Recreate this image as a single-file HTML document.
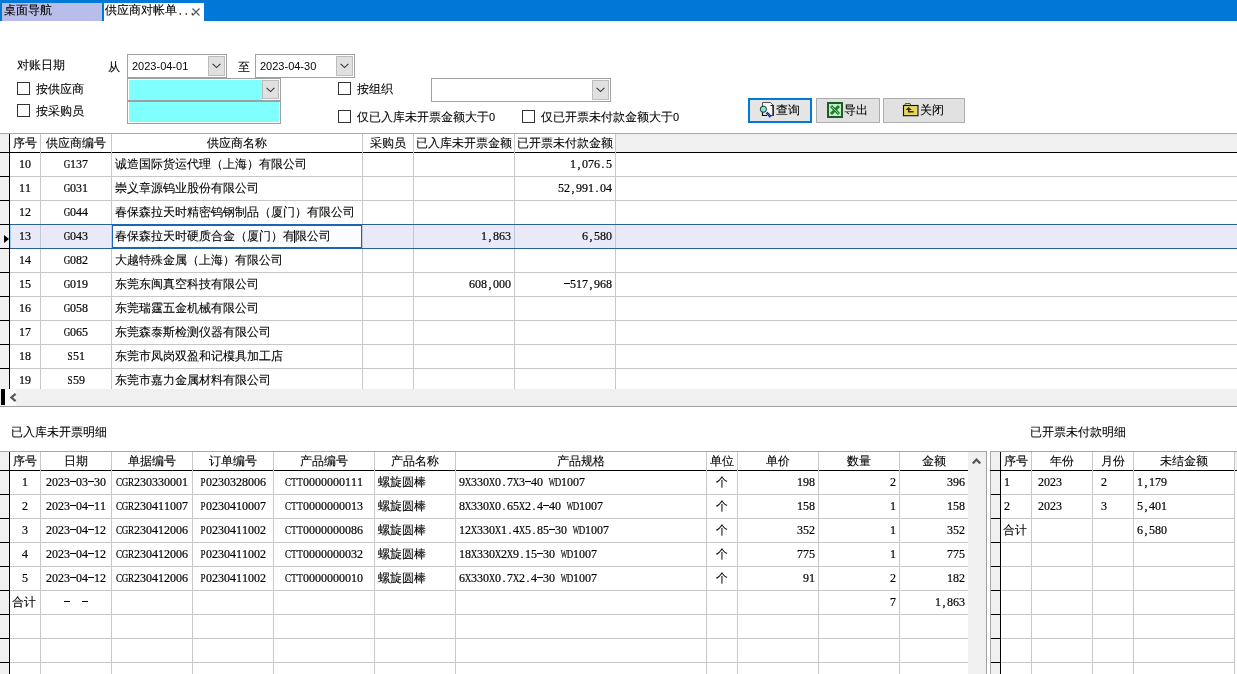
<!DOCTYPE html><html><head><meta charset="utf-8"><style>
html,body{margin:0;padding:0;}
body{width:1237px;height:674px;overflow:hidden;position:relative;background:#fff;font-family:"Liberation Sans",sans-serif;font-size:12px;color:#000;}
div,span,svg{position:absolute;box-sizing:border-box;}
span{white-space:pre;line-height:12px;}
.c{font-size:12px;-webkit-text-stroke:0.1px #000;}
.m{font-family:"Liberation Mono",monospace;font-size:11px;letter-spacing:-0.6px;line-height:12px;transform:translateY(-0.5px) scaleY(1.1);}
.s{font-family:"Liberation Sans",sans-serif;font-size:11px;line-height:12px;}
.k{font-family:"Liberation Serif",serif;font-size:12px;line-height:12px;-webkit-text-stroke:0.2px #000;}
.k i.h{height:12px;vertical-align:top;background:linear-gradient(#000,#000) 0 5px/6px 1px no-repeat;}
.k i{display:inline-block;width:6px;text-align:center;font-style:normal;}
.k b{display:inline-flex;justify-content:center;width:6px;font-weight:normal;transform:scaleX(.75);}
.k b.w{transform:scaleX(.58);}
</style></head><body><div id="root" style="left:0;top:0;width:1237px;height:674px;will-change:transform;">
<div style="left:0px;top:0px;width:1237px;height:21px;background:#0078d7;"></div>
<div style="left:2px;top:3px;width:100px;height:18px;background:#b8bde9;"></div>
<div style="left:104px;top:3px;width:100px;height:18px;background:#fff;"></div>
<span class="c" style="left:4px;top:4px;">桌面导航</span>
<span class="c" style="left:105px;top:4px;">供应商对帐单</span>
<span class="m" style="left:177px;top:6px;color:#444;">...</span>
<svg style="left:191px;top:7px;" width="10" height="10" viewBox="0 0 10 10"><path d="M1.5 1.5L8.5 8.5M8.5 1.5L1.5 8.5" stroke="#555" stroke-width="1.1"/></svg>
<span class="c" style="left:17px;top:59px;">对账日期</span>
<span class="c" style="left:108px;top:61px;">从</span>
<span class="c" style="left:238px;top:61px;">至</span>
<div style="left:127px;top:54px;width:100px;height:24px;border:1px solid #a0a0a0;background:#fff;"></div>
<div style="left:208px;top:56px;width:17px;height:20px;background:#e0e0e0;border:1px solid #bcbcbc;"></div>
<svg style="left:211px;top:63px;" width="11" height="6" viewBox="0 0 11 6"><path d="M1.6 0.9L5.5 4.6L9.4 0.9" fill="none" stroke="#333" stroke-width="1.1"/></svg>
<span class="s" style="left:132px;top:60px;">2023-04-01</span>
<div style="left:255px;top:54px;width:100px;height:24px;border:1px solid #a0a0a0;background:#fff;"></div>
<div style="left:336px;top:56px;width:17px;height:20px;background:#e0e0e0;border:1px solid #bcbcbc;"></div>
<svg style="left:339px;top:63px;" width="11" height="6" viewBox="0 0 11 6"><path d="M1.6 0.9L5.5 4.6L9.4 0.9" fill="none" stroke="#333" stroke-width="1.1"/></svg>
<span class="s" style="left:260px;top:60px;">2023-04-30</span>
<div style="left:127px;top:78px;width:154px;height:23px;border:1px solid #a0a0a0;background:#fff;"></div>
<div style="left:129px;top:80px;width:133px;height:20px;background:#80ffff;"></div>
<div style="left:262px;top:80px;width:17px;height:19px;background:#e0e0e0;border:1px solid #bcbcbc;"></div>
<svg style="left:265px;top:87px;" width="11" height="6" viewBox="0 0 11 6"><path d="M1.6 0.9L5.5 4.6L9.4 0.9" fill="none" stroke="#333" stroke-width="1.1"/></svg>
<div style="left:127px;top:101px;width:154px;height:23px;border:1px solid #a0a0a0;background:#fff;"></div>
<div style="left:129px;top:102px;width:150px;height:20px;background:#80ffff;"></div>
<div style="left:431px;top:78px;width:180px;height:24px;border:1px solid #a0a0a0;background:#fff;"></div>
<div style="left:592px;top:80px;width:17px;height:20px;background:#e0e0e0;border:1px solid #bcbcbc;"></div>
<svg style="left:595px;top:87px;" width="11" height="6" viewBox="0 0 11 6"><path d="M1.6 0.9L5.5 4.6L9.4 0.9" fill="none" stroke="#333" stroke-width="1.1"/></svg>
<div style="left:17px;top:82px;width:13px;height:13px;border:1px solid #333;background:#fff;"></div>
<span class="c" style="left:36px;top:83px;">按供应商</span>
<div style="left:17px;top:104px;width:13px;height:13px;border:1px solid #333;background:#fff;"></div>
<span class="c" style="left:36px;top:105px;">按采购员</span>
<div style="left:338px;top:82px;width:13px;height:13px;border:1px solid #333;background:#fff;"></div>
<span class="c" style="left:357px;top:83px;">按组织</span>
<div style="left:338px;top:110px;width:13px;height:13px;border:1px solid #333;background:#fff;"></div>
<span class="c" style="left:357px;top:111px;">仅已入库未开票金额大于<span class="s" style="position:static">0</span></span>
<div style="left:522px;top:110px;width:13px;height:13px;border:1px solid #333;background:#fff;"></div>
<span class="c" style="left:541px;top:111px;">仅已开票未付款金额大于<span class="s" style="position:static">0</span></span>
<div style="left:748px;top:98px;width:64px;height:25px;border:2px solid #0078d7;background:#e5e5e5;"></div>
<span class="c" style="left:776px;top:104px;">查询</span>
<div style="left:816px;top:98px;width:64px;height:25px;border:1px solid #adadad;background:#e1e1e1;"></div>
<span class="c" style="left:844px;top:104px;">导出</span>
<div style="left:883px;top:98px;width:82px;height:25px;border:1px solid #adadad;background:#e1e1e1;"></div>
<span class="c" style="left:920px;top:104px;">关闭</span>
<svg style="left:758px;top:101px;" width="18" height="18" viewBox="0 0 18 18">
<path d="M4.5 5V1.5H12.5L15 4V14.5H10" fill="#fbf4f4" stroke="#555" stroke-width="1"/>
<path d="M12.5 4.5H15.2V15" fill="none" stroke="#111" stroke-width="1.2"/>
<path d="M4.5 11V14.5H9" fill="none" stroke="#111" stroke-width="1.2"/>
<path d="M8.6 11.6L12.8 15.8" stroke="#10208a" stroke-width="2.4"/>
<path d="M8.6 11.6L12.8 15.8" stroke="#5a7ae0" stroke-width="0.7"/>
<circle cx="5.4" cy="8.2" r="3.1" fill="#7de6dc" stroke="#1a1a1a" stroke-width="0.9"/>
</svg>
<svg style="left:827px;top:102px;" width="16" height="16" viewBox="0 0 16 16">
<rect x="1" y="1" width="14" height="14" fill="#bdf2bd" stroke="#1f5a2a" stroke-width="2"/>
<path d="M4 4L12 12M12 4L4 12" stroke="#237a35" stroke-width="3"/>
<path d="M4.5 4.5L11.5 11.5" stroke="#a8e8a8" stroke-width="0.8"/>
</svg>
<svg style="left:902px;top:102px;" width="17" height="15" viewBox="0 0 17 15">
<path d="M2.5 3.5L3.5 1.5H8L9 3.5Z" fill="#d8e070" stroke="#333" stroke-width="0.8"/>
<rect x="1.5" y="3.5" width="14.5" height="10.2" fill="#e2d862" stroke="#111" stroke-width="1.1"/>
<path d="M3.6 8L6.7 4.9L9.8 8Z" fill="#3a2a10"/>
<path d="M6.7 6.5V9.8H11.6" fill="none" stroke="#3a2a10" stroke-width="1.5"/>
</svg>
<div style="left:0px;top:133px;width:1237px;height:1px;background:#a8a8a8;"></div>
<div style="left:616px;top:134px;width:621px;height:18px;background:#f0f0f0;"></div>
<div style="left:0px;top:134px;width:9px;height:255px;background:#f0f0f0;"></div>
<div style="left:9px;top:134px;width:1px;height:255px;background:#000;"></div>
<div style="left:0px;top:152px;width:1237px;height:1px;background:#000;"></div>
<div style="left:40px;top:134px;width:1px;height:255px;background:#c8c8c8;"></div>
<div style="left:111px;top:134px;width:1px;height:255px;background:#c8c8c8;"></div>
<div style="left:362px;top:134px;width:1px;height:255px;background:#c8c8c8;"></div>
<div style="left:413px;top:134px;width:1px;height:255px;background:#c8c8c8;"></div>
<div style="left:514px;top:134px;width:1px;height:255px;background:#c8c8c8;"></div>
<div style="left:615px;top:134px;width:1px;height:255px;background:#c8c8c8;"></div>
<span class="c" style="left:10px;top:137px;width:30px;text-align:center;">序号</span>
<span class="c" style="left:41px;top:137px;width:70px;text-align:center;">供应商编号</span>
<span class="c" style="left:112px;top:137px;width:250px;text-align:center;">供应商名称</span>
<span class="c" style="left:363px;top:137px;width:50px;text-align:center;">采购员</span>
<span class="c" style="left:414px;top:137px;width:100px;text-align:center;">已入库未开票金额</span>
<span class="c" style="left:515px;top:137px;width:100px;text-align:center;">已开票未付款金额</span>
<div style="left:10px;top:176px;width:1227px;height:1px;background:#c8c8c8;"></div>
<div style="left:0px;top:176px;width:9px;height:1px;background:#000;"></div>
<div style="left:10px;top:200px;width:1227px;height:1px;background:#c8c8c8;"></div>
<div style="left:0px;top:200px;width:9px;height:1px;background:#000;"></div>
<div style="left:10px;top:224px;width:1227px;height:1px;background:#c8c8c8;"></div>
<div style="left:0px;top:224px;width:9px;height:1px;background:#000;"></div>
<div style="left:10px;top:248px;width:1227px;height:1px;background:#c8c8c8;"></div>
<div style="left:0px;top:248px;width:9px;height:1px;background:#000;"></div>
<div style="left:10px;top:272px;width:1227px;height:1px;background:#c8c8c8;"></div>
<div style="left:0px;top:272px;width:9px;height:1px;background:#000;"></div>
<div style="left:10px;top:296px;width:1227px;height:1px;background:#c8c8c8;"></div>
<div style="left:0px;top:296px;width:9px;height:1px;background:#000;"></div>
<div style="left:10px;top:320px;width:1227px;height:1px;background:#c8c8c8;"></div>
<div style="left:0px;top:320px;width:9px;height:1px;background:#000;"></div>
<div style="left:10px;top:344px;width:1227px;height:1px;background:#c8c8c8;"></div>
<div style="left:0px;top:344px;width:9px;height:1px;background:#000;"></div>
<div style="left:10px;top:368px;width:1227px;height:1px;background:#c8c8c8;"></div>
<div style="left:0px;top:368px;width:9px;height:1px;background:#000;"></div>
<div style="left:10px;top:225px;width:1227px;height:23px;background:#e9e9f8;"></div>
<div style="left:40px;top:225px;width:1px;height:23px;background:#c0c8dc;"></div>
<div style="left:111px;top:225px;width:1px;height:23px;background:#c0c8dc;"></div>
<div style="left:362px;top:225px;width:1px;height:23px;background:#c0c8dc;"></div>
<div style="left:413px;top:225px;width:1px;height:23px;background:#c0c8dc;"></div>
<div style="left:514px;top:225px;width:1px;height:23px;background:#c0c8dc;"></div>
<div style="left:615px;top:225px;width:1px;height:23px;background:#c0c8dc;"></div>
<div style="left:10px;top:224px;width:1227px;height:1px;background:#2a6296;"></div>
<div style="left:10px;top:248px;width:1227px;height:1px;background:#2a6296;"></div>
<div style="left:10px;top:225px;width:1px;height:23px;background:#9fd0f0;"></div>
<div style="left:112px;top:224px;width:250px;height:25px;border:2px solid #1c64b4;border-left-width:1px;border-right-width:1px;background:#fbfcff;"></div>
<svg style="left:4px;top:235px;" width="5" height="8" viewBox="0 0 5 8"><path d="M0 0L5 4L0 8Z" fill="#000"/></svg>
<span class="k" style="left:19px;top:158px;"><i>1</i><i>0</i></span>
<span class="k" style="left:64px;top:158px;"><i><b>G</b></i><i>1</i><i>3</i><i>7</i></span>
<span class="c" style="left:115px;top:158px;">诚造国际货运代理（上海）有限公司</span>
<span class="k" style="left:570px;top:158px;"><i>1</i><i>,</i><i>0</i><i>7</i><i>6</i><i>.</i><i>5</i></span>
<span class="k" style="left:19px;top:182px;"><i>1</i><i>1</i></span>
<span class="k" style="left:64px;top:182px;"><i><b>G</b></i><i>0</i><i>3</i><i>1</i></span>
<span class="c" style="left:115px;top:182px;">崇义章源钨业股份有限公司</span>
<span class="k" style="left:558px;top:182px;"><i>5</i><i>2</i><i>,</i><i>9</i><i>9</i><i>1</i><i>.</i><i>0</i><i>4</i></span>
<span class="k" style="left:19px;top:206px;"><i>1</i><i>2</i></span>
<span class="k" style="left:64px;top:206px;"><i><b>G</b></i><i>0</i><i>4</i><i>4</i></span>
<span class="c" style="left:115px;top:206px;">春保森拉天时精密钨钢制品（厦门）有限公司</span>
<span class="k" style="left:19px;top:230px;"><i>1</i><i>3</i></span>
<span class="k" style="left:64px;top:230px;"><i><b>G</b></i><i>0</i><i>4</i><i>3</i></span>
<span class="c" style="left:115px;top:230px;">春保森拉天时硬质合金（厦门）有限公司</span>
<span class="k" style="left:481px;top:230px;"><i>1</i><i>,</i><i>8</i><i>6</i><i>3</i></span>
<span class="k" style="left:582px;top:230px;"><i>6</i><i>,</i><i>5</i><i>8</i><i>0</i></span>
<span class="k" style="left:19px;top:254px;"><i>1</i><i>4</i></span>
<span class="k" style="left:64px;top:254px;"><i><b>G</b></i><i>0</i><i>8</i><i>2</i></span>
<span class="c" style="left:115px;top:254px;">大越特殊金属（上海）有限公司</span>
<span class="k" style="left:19px;top:278px;"><i>1</i><i>5</i></span>
<span class="k" style="left:64px;top:278px;"><i><b>G</b></i><i>0</i><i>1</i><i>9</i></span>
<span class="c" style="left:115px;top:278px;">东莞东闽真空科技有限公司</span>
<span class="k" style="left:469px;top:278px;"><i>6</i><i>0</i><i>8</i><i>,</i><i>0</i><i>0</i><i>0</i></span>
<span class="k" style="left:564px;top:278px;"><i class="h"></i><i>5</i><i>1</i><i>7</i><i>,</i><i>9</i><i>6</i><i>8</i></span>
<span class="k" style="left:19px;top:302px;"><i>1</i><i>6</i></span>
<span class="k" style="left:64px;top:302px;"><i><b>G</b></i><i>0</i><i>5</i><i>8</i></span>
<span class="c" style="left:115px;top:302px;">东莞瑞霆五金机械有限公司</span>
<span class="k" style="left:19px;top:326px;"><i>1</i><i>7</i></span>
<span class="k" style="left:64px;top:326px;"><i><b>G</b></i><i>0</i><i>6</i><i>5</i></span>
<span class="c" style="left:115px;top:326px;">东莞森泰斯检测仪器有限公司</span>
<span class="k" style="left:19px;top:350px;"><i>1</i><i>8</i></span>
<span class="k" style="left:67px;top:350px;"><i><b>S</b></i><i>5</i><i>1</i></span>
<span class="c" style="left:115px;top:350px;">东莞市凤岗双盈和记模具加工店</span>
<span class="k" style="left:19px;top:374px;"><i>1</i><i>9</i></span>
<span class="k" style="left:67px;top:374px;"><i><b>S</b></i><i>5</i><i>9</i></span>
<span class="c" style="left:115px;top:374px;">东莞市嘉力金属材料有限公司</span>
<div style="left:294px;top:230px;width:1px;height:13px;background:#000;"></div>
<div style="left:0px;top:389px;width:1237px;height:17px;background:#f0f0f0;"></div>
<div style="left:5px;top:389px;width:11px;height:17px;background:#fafafa;"></div>
<div style="left:1px;top:389px;width:4px;height:16px;background:#000;"></div>
<svg style="left:10px;top:393px;" width="7" height="9" viewBox="0 0 7 9"><path d="M5.6 0.8L1.4 4.5L5.6 8.2" fill="none" stroke="#555" stroke-width="2.2"/></svg>
<div style="left:0px;top:406px;width:1237px;height:1px;background:#a0a0a0;"></div>
<span class="c" style="left:11px;top:426px;">已入库未开票明细</span>
<div style="left:0px;top:451px;width:987px;height:1px;background:#a8a8a8;"></div>
<div style="left:0px;top:452px;width:9px;height:222px;background:#f0f0f0;"></div>
<div style="left:9px;top:452px;width:1px;height:222px;background:#000;"></div>
<div style="left:0px;top:470px;width:968px;height:1px;background:#000;"></div>
<div style="left:40px;top:452px;width:1px;height:222px;background:#c8c8c8;"></div>
<div style="left:111px;top:452px;width:1px;height:222px;background:#c8c8c8;"></div>
<div style="left:192px;top:452px;width:1px;height:222px;background:#c8c8c8;"></div>
<div style="left:273px;top:452px;width:1px;height:222px;background:#c8c8c8;"></div>
<div style="left:374px;top:452px;width:1px;height:222px;background:#c8c8c8;"></div>
<div style="left:455px;top:452px;width:1px;height:222px;background:#c8c8c8;"></div>
<div style="left:706px;top:452px;width:1px;height:222px;background:#c8c8c8;"></div>
<div style="left:737px;top:452px;width:1px;height:222px;background:#c8c8c8;"></div>
<div style="left:818px;top:452px;width:1px;height:222px;background:#c8c8c8;"></div>
<div style="left:899px;top:452px;width:1px;height:222px;background:#c8c8c8;"></div>
<span class="c" style="left:10px;top:455px;width:30px;text-align:center;">序号</span>
<span class="c" style="left:41px;top:455px;width:70px;text-align:center;">日期</span>
<span class="c" style="left:112px;top:455px;width:80px;text-align:center;">单据编号</span>
<span class="c" style="left:193px;top:455px;width:80px;text-align:center;">订单编号</span>
<span class="c" style="left:274px;top:455px;width:100px;text-align:center;">产品编号</span>
<span class="c" style="left:375px;top:455px;width:80px;text-align:center;">产品名称</span>
<span class="c" style="left:456px;top:455px;width:250px;text-align:center;">产品规格</span>
<span class="c" style="left:707px;top:455px;width:30px;text-align:center;">单位</span>
<span class="c" style="left:738px;top:455px;width:80px;text-align:center;">单价</span>
<span class="c" style="left:819px;top:455px;width:80px;text-align:center;">数量</span>
<span class="c" style="left:900px;top:455px;width:68px;text-align:center;">金额</span>
<span class="k" style="left:22px;top:476px;"><i>1</i></span>
<span class="k" style="left:46px;top:476px;"><i>2</i><i>0</i><i>2</i><i>3</i><i class="h"></i><i>0</i><i>3</i><i class="h"></i><i>3</i><i>0</i></span>
<span class="k" style="left:116px;top:476px;"><i><b>C</b></i><i><b>G</b></i><i><b>R</b></i><i>2</i><i>3</i><i>0</i><i>3</i><i>3</i><i>0</i><i>0</i><i>0</i><i>1</i></span>
<span class="k" style="left:200px;top:476px;"><i><b>P</b></i><i>0</i><i>2</i><i>3</i><i>0</i><i>3</i><i>2</i><i>8</i><i>0</i><i>0</i><i>6</i></span>
<span class="k" style="left:285px;top:476px;"><i><b>C</b></i><i><b>T</b></i><i><b>T</b></i><i>0</i><i>0</i><i>0</i><i>0</i><i>0</i><i>0</i><i>0</i><i>1</i><i>1</i><i>1</i></span>
<span class="c" style="left:378px;top:476px;">螺旋圆棒</span>
<span class="k" style="left:459px;top:476px;"><i>9</i><i><b>X</b></i><i>3</i><i>3</i><i>0</i><i><b>X</b></i><i>0</i><i>.</i><i>7</i><i><b>X</b></i><i>3</i><i class="h"></i><i>4</i><i>0</i><i> </i><i><b class="w">W</b></i><i><b>D</b></i><i>1</i><i>0</i><i>0</i><i>7</i></span>
<span class="c" style="left:707px;top:476px;width:30px;text-align:center;">个</span>
<span class="k" style="left:797px;top:476px;"><i>1</i><i>9</i><i>8</i></span>
<span class="k" style="left:890px;top:476px;"><i>2</i></span>
<span class="k" style="left:947px;top:476px;"><i>3</i><i>9</i><i>6</i></span>
<div style="left:10px;top:494px;width:958px;height:1px;background:#c8c8c8;"></div>
<div style="left:0px;top:494px;width:9px;height:1px;background:#000;"></div>
<span class="k" style="left:22px;top:500px;"><i>2</i></span>
<span class="k" style="left:46px;top:500px;"><i>2</i><i>0</i><i>2</i><i>3</i><i class="h"></i><i>0</i><i>4</i><i class="h"></i><i>1</i><i>1</i></span>
<span class="k" style="left:116px;top:500px;"><i><b>C</b></i><i><b>G</b></i><i><b>R</b></i><i>2</i><i>3</i><i>0</i><i>4</i><i>1</i><i>1</i><i>0</i><i>0</i><i>7</i></span>
<span class="k" style="left:200px;top:500px;"><i><b>P</b></i><i>0</i><i>2</i><i>3</i><i>0</i><i>4</i><i>1</i><i>0</i><i>0</i><i>0</i><i>7</i></span>
<span class="k" style="left:285px;top:500px;"><i><b>C</b></i><i><b>T</b></i><i><b>T</b></i><i>0</i><i>0</i><i>0</i><i>0</i><i>0</i><i>0</i><i>0</i><i>0</i><i>1</i><i>3</i></span>
<span class="c" style="left:378px;top:500px;">螺旋圆棒</span>
<span class="k" style="left:459px;top:500px;"><i>8</i><i><b>X</b></i><i>3</i><i>3</i><i>0</i><i><b>X</b></i><i>0</i><i>.</i><i>6</i><i>5</i><i><b>X</b></i><i>2</i><i>.</i><i>4</i><i class="h"></i><i>4</i><i>0</i><i> </i><i><b class="w">W</b></i><i><b>D</b></i><i>1</i><i>0</i><i>0</i><i>7</i></span>
<span class="c" style="left:707px;top:500px;width:30px;text-align:center;">个</span>
<span class="k" style="left:797px;top:500px;"><i>1</i><i>5</i><i>8</i></span>
<span class="k" style="left:890px;top:500px;"><i>1</i></span>
<span class="k" style="left:947px;top:500px;"><i>1</i><i>5</i><i>8</i></span>
<div style="left:10px;top:518px;width:958px;height:1px;background:#c8c8c8;"></div>
<div style="left:0px;top:518px;width:9px;height:1px;background:#000;"></div>
<span class="k" style="left:22px;top:524px;"><i>3</i></span>
<span class="k" style="left:46px;top:524px;"><i>2</i><i>0</i><i>2</i><i>3</i><i class="h"></i><i>0</i><i>4</i><i class="h"></i><i>1</i><i>2</i></span>
<span class="k" style="left:116px;top:524px;"><i><b>C</b></i><i><b>G</b></i><i><b>R</b></i><i>2</i><i>3</i><i>0</i><i>4</i><i>1</i><i>2</i><i>0</i><i>0</i><i>6</i></span>
<span class="k" style="left:200px;top:524px;"><i><b>P</b></i><i>0</i><i>2</i><i>3</i><i>0</i><i>4</i><i>1</i><i>1</i><i>0</i><i>0</i><i>2</i></span>
<span class="k" style="left:285px;top:524px;"><i><b>C</b></i><i><b>T</b></i><i><b>T</b></i><i>0</i><i>0</i><i>0</i><i>0</i><i>0</i><i>0</i><i>0</i><i>0</i><i>8</i><i>6</i></span>
<span class="c" style="left:378px;top:524px;">螺旋圆棒</span>
<span class="k" style="left:459px;top:524px;"><i>1</i><i>2</i><i><b>X</b></i><i>3</i><i>3</i><i>0</i><i><b>X</b></i><i>1</i><i>.</i><i>4</i><i><b>X</b></i><i>5</i><i>.</i><i>8</i><i>5</i><i class="h"></i><i>3</i><i>0</i><i> </i><i><b class="w">W</b></i><i><b>D</b></i><i>1</i><i>0</i><i>0</i><i>7</i></span>
<span class="c" style="left:707px;top:524px;width:30px;text-align:center;">个</span>
<span class="k" style="left:797px;top:524px;"><i>3</i><i>5</i><i>2</i></span>
<span class="k" style="left:890px;top:524px;"><i>1</i></span>
<span class="k" style="left:947px;top:524px;"><i>3</i><i>5</i><i>2</i></span>
<div style="left:10px;top:542px;width:958px;height:1px;background:#c8c8c8;"></div>
<div style="left:0px;top:542px;width:9px;height:1px;background:#000;"></div>
<span class="k" style="left:22px;top:548px;"><i>4</i></span>
<span class="k" style="left:46px;top:548px;"><i>2</i><i>0</i><i>2</i><i>3</i><i class="h"></i><i>0</i><i>4</i><i class="h"></i><i>1</i><i>2</i></span>
<span class="k" style="left:116px;top:548px;"><i><b>C</b></i><i><b>G</b></i><i><b>R</b></i><i>2</i><i>3</i><i>0</i><i>4</i><i>1</i><i>2</i><i>0</i><i>0</i><i>6</i></span>
<span class="k" style="left:200px;top:548px;"><i><b>P</b></i><i>0</i><i>2</i><i>3</i><i>0</i><i>4</i><i>1</i><i>1</i><i>0</i><i>0</i><i>2</i></span>
<span class="k" style="left:285px;top:548px;"><i><b>C</b></i><i><b>T</b></i><i><b>T</b></i><i>0</i><i>0</i><i>0</i><i>0</i><i>0</i><i>0</i><i>0</i><i>0</i><i>3</i><i>2</i></span>
<span class="c" style="left:378px;top:548px;">螺旋圆棒</span>
<span class="k" style="left:459px;top:548px;"><i>1</i><i>8</i><i><b>X</b></i><i>3</i><i>3</i><i>0</i><i><b>X</b></i><i>2</i><i><b>X</b></i><i>9</i><i>.</i><i>1</i><i>5</i><i class="h"></i><i>3</i><i>0</i><i> </i><i><b class="w">W</b></i><i><b>D</b></i><i>1</i><i>0</i><i>0</i><i>7</i></span>
<span class="c" style="left:707px;top:548px;width:30px;text-align:center;">个</span>
<span class="k" style="left:797px;top:548px;"><i>7</i><i>7</i><i>5</i></span>
<span class="k" style="left:890px;top:548px;"><i>1</i></span>
<span class="k" style="left:947px;top:548px;"><i>7</i><i>7</i><i>5</i></span>
<div style="left:10px;top:566px;width:958px;height:1px;background:#c8c8c8;"></div>
<div style="left:0px;top:566px;width:9px;height:1px;background:#000;"></div>
<span class="k" style="left:22px;top:572px;"><i>5</i></span>
<span class="k" style="left:46px;top:572px;"><i>2</i><i>0</i><i>2</i><i>3</i><i class="h"></i><i>0</i><i>4</i><i class="h"></i><i>1</i><i>2</i></span>
<span class="k" style="left:116px;top:572px;"><i><b>C</b></i><i><b>G</b></i><i><b>R</b></i><i>2</i><i>3</i><i>0</i><i>4</i><i>1</i><i>2</i><i>0</i><i>0</i><i>6</i></span>
<span class="k" style="left:200px;top:572px;"><i><b>P</b></i><i>0</i><i>2</i><i>3</i><i>0</i><i>4</i><i>1</i><i>1</i><i>0</i><i>0</i><i>2</i></span>
<span class="k" style="left:285px;top:572px;"><i><b>C</b></i><i><b>T</b></i><i><b>T</b></i><i>0</i><i>0</i><i>0</i><i>0</i><i>0</i><i>0</i><i>0</i><i>0</i><i>1</i><i>0</i></span>
<span class="c" style="left:378px;top:572px;">螺旋圆棒</span>
<span class="k" style="left:459px;top:572px;"><i>6</i><i><b>X</b></i><i>3</i><i>3</i><i>0</i><i><b>X</b></i><i>0</i><i>.</i><i>7</i><i><b>X</b></i><i>2</i><i>.</i><i>4</i><i class="h"></i><i>3</i><i>0</i><i> </i><i><b class="w">W</b></i><i><b>D</b></i><i>1</i><i>0</i><i>0</i><i>7</i></span>
<span class="c" style="left:707px;top:572px;width:30px;text-align:center;">个</span>
<span class="k" style="left:803px;top:572px;"><i>9</i><i>1</i></span>
<span class="k" style="left:890px;top:572px;"><i>2</i></span>
<span class="k" style="left:947px;top:572px;"><i>1</i><i>8</i><i>2</i></span>
<div style="left:10px;top:590px;width:958px;height:1px;background:#c8c8c8;"></div>
<div style="left:0px;top:590px;width:9px;height:1px;background:#000;"></div>
<span class="c" style="left:12px;top:596px;">合计</span>
<span class="k" style="left:64px;top:596px;"><i class="h"></i><i> </i><i> </i><i class="h"></i></span>
<span class="k" style="left:890px;top:596px;"><i>7</i></span>
<span class="k" style="left:935px;top:596px;"><i>1</i><i>,</i><i>8</i><i>6</i><i>3</i></span>
<div style="left:10px;top:614px;width:958px;height:1px;background:#c8c8c8;"></div>
<div style="left:0px;top:614px;width:9px;height:1px;background:#000;"></div>
<div style="left:10px;top:638px;width:958px;height:1px;background:#c8c8c8;"></div>
<div style="left:0px;top:638px;width:9px;height:1px;background:#000;"></div>
<div style="left:10px;top:662px;width:958px;height:1px;background:#c8c8c8;"></div>
<div style="left:0px;top:662px;width:9px;height:1px;background:#000;"></div>
<div style="left:968px;top:452px;width:18px;height:222px;background:#f0f0f0;"></div>
<div style="left:986px;top:452px;width:1px;height:222px;background:#a0a0a0;"></div>
<svg style="left:972px;top:458px;" width="9" height="7" viewBox="0 0 9 7"><path d="M0.8 5.6L4.5 1.6L8.2 5.6" fill="none" stroke="#555" stroke-width="2.2"/></svg>
<span class="c" style="left:1030px;top:426px;">已开票未付款明细</span>
<div style="left:990px;top:451px;width:247px;height:1px;background:#a8a8a8;"></div>
<div style="left:990px;top:452px;width:1px;height:222px;background:#a8a8a8;"></div>
<div style="left:991px;top:452px;width:9px;height:222px;background:#f0f0f0;"></div>
<div style="left:1000px;top:452px;width:1px;height:222px;background:#000;"></div>
<div style="left:990px;top:470px;width:247px;height:1px;background:#000;"></div>
<div style="left:1235px;top:452px;width:2px;height:18px;background:#f0f0f0;"></div>
<div style="left:1031px;top:452px;width:1px;height:222px;background:#c8c8c8;"></div>
<div style="left:1092px;top:452px;width:1px;height:222px;background:#c8c8c8;"></div>
<div style="left:1133px;top:452px;width:1px;height:222px;background:#c8c8c8;"></div>
<div style="left:1234px;top:452px;width:1px;height:222px;background:#c8c8c8;"></div>
<span class="c" style="left:1001px;top:455px;width:30px;text-align:center;">序号</span>
<span class="c" style="left:1032px;top:455px;width:60px;text-align:center;">年份</span>
<span class="c" style="left:1093px;top:455px;width:40px;text-align:center;">月份</span>
<span class="c" style="left:1134px;top:455px;width:100px;text-align:center;">未结金额</span>
<span class="k" style="left:1004px;top:476px;"><i>1</i></span>
<span class="k" style="left:1038px;top:476px;"><i>2</i><i>0</i><i>2</i><i>3</i></span>
<span class="k" style="left:1101px;top:476px;"><i>2</i></span>
<span class="k" style="left:1137px;top:476px;"><i>1</i><i>,</i><i>1</i><i>7</i><i>9</i></span>
<div style="left:1001px;top:494px;width:233px;height:1px;background:#c8c8c8;"></div>
<div style="left:991px;top:494px;width:9px;height:1px;background:#000;"></div>
<span class="k" style="left:1004px;top:500px;"><i>2</i></span>
<span class="k" style="left:1038px;top:500px;"><i>2</i><i>0</i><i>2</i><i>3</i></span>
<span class="k" style="left:1101px;top:500px;"><i>3</i></span>
<span class="k" style="left:1137px;top:500px;"><i>5</i><i>,</i><i>4</i><i>0</i><i>1</i></span>
<div style="left:1001px;top:518px;width:233px;height:1px;background:#c8c8c8;"></div>
<div style="left:991px;top:518px;width:9px;height:1px;background:#000;"></div>
<span class="c" style="left:1003px;top:524px;">合计</span>
<span class="k" style="left:1137px;top:524px;"><i>6</i><i>,</i><i>5</i><i>8</i><i>0</i></span>
<div style="left:1001px;top:542px;width:233px;height:1px;background:#c8c8c8;"></div>
<div style="left:991px;top:542px;width:9px;height:1px;background:#000;"></div>
<div style="left:1001px;top:566px;width:233px;height:1px;background:#c8c8c8;"></div>
<div style="left:991px;top:566px;width:9px;height:1px;background:#000;"></div>
<div style="left:1001px;top:590px;width:233px;height:1px;background:#c8c8c8;"></div>
<div style="left:991px;top:590px;width:9px;height:1px;background:#000;"></div>
<div style="left:1001px;top:614px;width:233px;height:1px;background:#c8c8c8;"></div>
<div style="left:991px;top:614px;width:9px;height:1px;background:#000;"></div>
<div style="left:1001px;top:638px;width:233px;height:1px;background:#c8c8c8;"></div>
<div style="left:991px;top:638px;width:9px;height:1px;background:#000;"></div>
<div style="left:1001px;top:662px;width:233px;height:1px;background:#c8c8c8;"></div>
<div style="left:991px;top:662px;width:9px;height:1px;background:#000;"></div>
</div></body></html>
